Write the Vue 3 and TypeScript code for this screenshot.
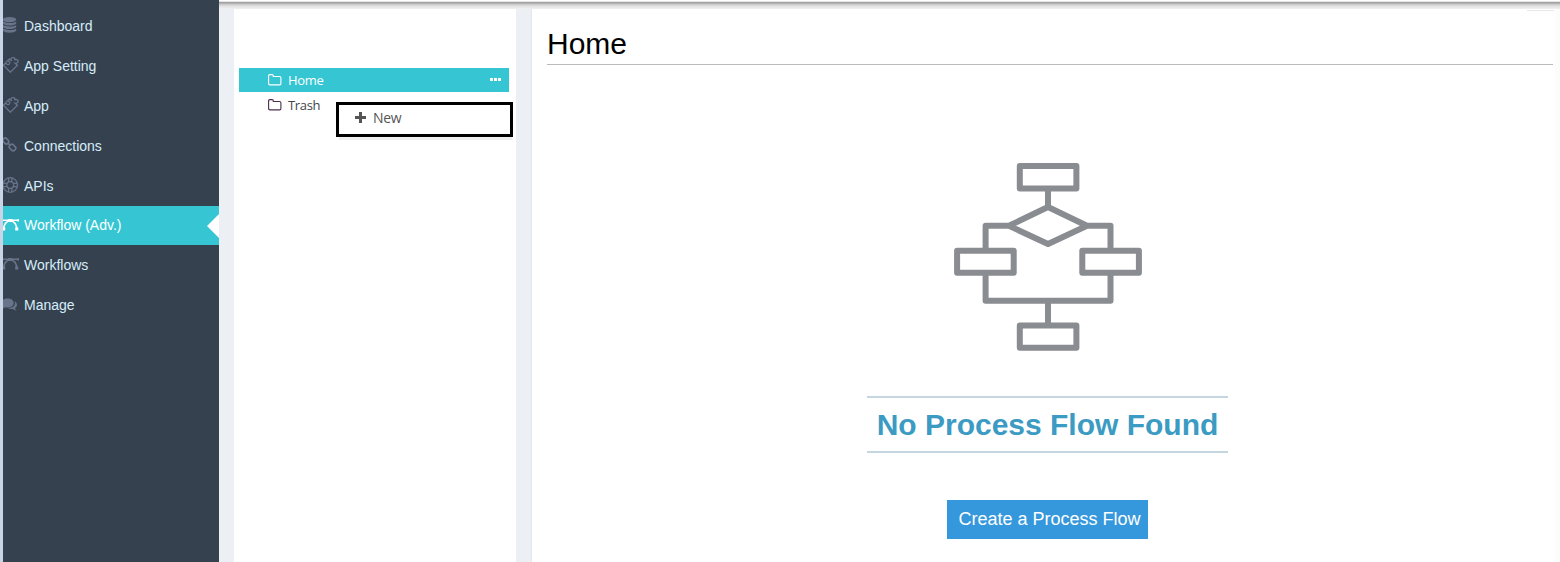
<script setup lang="ts">
interface NavItem {
  label: string
  icon: 'database' | 'puzzle' | 'link' | 'support' | 'vector' | 'bubbles'
  active?: boolean
}

const navItems: NavItem[] = [
  { label: 'Dashboard', icon: 'database' },
  { label: 'App Setting', icon: 'puzzle' },
  { label: 'App', icon: 'puzzle' },
  { label: 'Connections', icon: 'link' },
  { label: 'APIs', icon: 'support' },
  { label: 'Workflow (Adv.)', icon: 'vector', active: true },
  { label: 'Workflows', icon: 'vector' },
  { label: 'Manage', icon: 'bubbles' },
]

const folders = [
  { name: 'Home', selected: true },
  { name: 'Trash', selected: false },
]
</script>

<template>
  <div class="shell">
    <nav class="sidebar">
      <a v-for="item in navItems" :key="item.label" class="nav-item" :class="{ active: item.active }">
        <svg class="nav-icon" viewBox="0 0 16 16">
          <g v-if="item.icon === 'database'" class="solid">
            <ellipse cx="6.5" cy="2.6" rx="6.7" ry="2.6" />
            <path d="M-.2 4.4C2 6.5 11 6.5 13.2 4.4V6.4C11.5 9.2 1.5 9.2-.2 6.4Z" />
            <path d="M-.2 7.9C2 10 11 10 13.2 7.9V9.9C11.5 12.7 1.5 12.7-.2 9.9Z" />
            <path d="M-.2 11.4C2 13.5 11 13.5 13.2 11.4V13.4C11.5 16.4 1.5 16.4-.2 13.4Z" />
          </g>
          <g v-else-if="item.icon === 'puzzle'" class="line">
            <path d="M.4 8.3 7.3 15.2 14.4 8.2 12.3 6.3C14.4 6.7 15.8 4.7 14.7 3.2 13.7 2.1 12.3 2.3 11.3 3.2 12.6 1.6 11.2.2 9.6.6 7.9 1 7.5 2.7 8.8 4L6.6 2 4.4 4.1C6.2 3.8 7.4 5.4 6.4 6.8 5.2 8.2 3.2 7.5 3 5.7Z" />
          </g>
          <g v-else-if="item.icon === 'link'" class="chain">
            <rect x="-.3" y="1.8" width="6.2" height="4.4" rx="2" transform="rotate(45 2.8 4)" />
            <rect x="6.1" y="8" width="6.8" height="5" rx="2.2" transform="rotate(45 9.5 10.5)" />
            <path d="M4.6 5.8 7.4 8.6" />
          </g>
          <g v-else-if="item.icon === 'support'" class="line">
            <circle cx="7.2" cy="8" r="7.3" />
            <circle cx="7.2" cy="8" r="3.4" />
            <path d="M5.6.9V4.9M8.8.9V4.9M5.6 11.1V15.1M8.8 11.1V15.1M.1 6.4H4.1M.1 9.6H4.1M10.3 6.4H14.3M10.3 9.6H14.3" />
          </g>
          <g v-else-if="item.icon === 'vector'" transform="translate(0 1.2)">
            <path class="curve" d="M-1 2.1H15.8M.8 11C.8 6 2.8 3.2 7.2 2.5 11.7 3.2 13.7 6 13.7 11" />
            <path class="solid" d="M5 .8H9.4V3.8H5ZM-.9 9.4H2.2V12.4H-.9ZM12.2 9.4H15.3V12.4H12.2ZM14.4 1H16V3.2H14.4Z" />
          </g>
          <g v-else class="solid" transform="translate(0 1.2)">
            <path d="M4.5 1.4C8.3 1.4 10.7 3.3 10.7 5.9S8.3 10.4 4.5 10.4C3.6 10.4 2.8 10.3 2.1 10.1 1 11 .1 11.5-1.5 11.7-.7 10.9-.1 10.1 0 9-1.4 8.2-2 7.1-2 5.9-2 3.3.7 1.4 4.5 1.4Z" />
            <path d="M11.8 4C13.2 4.8 14 6 14 7.4 14 8.8 13.3 9.9 12.1 10.7 12.2 11.9 12.8 12.6 13.6 13.5 12.2 13.3 11 12.7 9.9 11.8 7.8 12.1 6.2 11.8 4.9 11.1 9.1 11 12.1 8.8 12.1 5.9Z" />
          </g>
        </svg>
        <span class="nav-label">{{ item.label }}</span>
      </a>
    </nav>

    <div class="body">
      <header class="topbar"></header>
      <div class="columns">
        <aside class="tree">
          <div v-for="folder in folders" :key="folder.name" class="folder" :class="{ selected: folder.selected }">
            <svg class="folder-icon" viewBox="0 0 14 12">
              <path d="M.6 9.6V1.9Q.6.6 1.9.6H4.1Q5.3.6 5.3 1.9V2.5H11.6Q12.9 2.5 12.9 3.8V9.6Q12.9 10.9 11.6 10.9H1.9Q.6 10.9.6 9.6Z" />
            </svg>
            <span>{{ folder.name }}</span>
            <svg v-if="folder.selected" class="dots" viewBox="0 0 11 3">
              <path d="M0 0H3V3H0ZM4 0H7V3H4ZM8 0H11V3H8Z" />
            </svg>
          </div>
          <div class="context-menu">
            <svg class="plus" viewBox="0 0 11 11">
              <path d="M4 0H7V4H11V7H7V11H4V7H0V4H4Z" />
            </svg>
            <span>New</span>
          </div>
        </aside>

        <main class="content">
          <div class="toolbar-edge"></div>
          <h1>Home</h1>
          <section class="empty">
            <svg class="flow" viewBox="0 0 188 188">
              <rect x="65.8" y="3" width="56.6" height="22.5" />
              <rect x="3.1" y="87.7" width="56.6" height="22.1" />
              <rect x="128.3" y="87.7" width="56.6" height="22.1" />
              <rect x="65.8" y="162.5" width="56.6" height="22.3" />
              <path d="M94 25V44M94 44 55 62.8 94 81 133 62.8ZM55 62.8H31.6V87M133 62.8H156.5V87M31.6 110V137.8H156.5V110M94 138V162" />
            </svg>
            <h2>No Process Flow Found</h2>
            <button type="button">Create a Process Flow</button>
          </section>
        </main>
      </div>
    </div>
  </div>
</template>

<style>
body {
  margin: 0;
  overflow: hidden;
}
</style>

<style scoped>
.shell {
  display: flex;
  width: 1560px;
  height: 562px;
  overflow: hidden;
  background: #ecf0f4;
  font-family: "Liberation Sans", Arial, sans-serif;
}

.sidebar {
  box-sizing: border-box;
  flex: 0 0 219px;
  padding-top: 6px;
  border-left: 3px solid #c8d5e7;
  background: #364150;
}

.nav-item {
  position: relative;
  display: flex;
  align-items: center;
  box-sizing: border-box;
  height: 40px;
  color: #d5edf8;
  font-size: 14px;
}

.nav-icon {
  width: 16px;
  height: 16px;
  margin: -2px 5px 0 0;
  color: #68748a;
}

.nav-label {
  line-height: 16px;
}

.active {
  height: 39px;
  background: #36c6d3;
  color: #fff;
}

.active .nav-label {
  margin-top: -2px;
}

.active .nav-icon {
  color: #fff;
}

.active::after {
  position: absolute;
  top: 8px;
  right: 0;
  border-top: 12px solid transparent;
  border-right: 12px solid #fff;
  border-bottom: 12px solid transparent;
  content: "";
}

.solid {
  fill: currentColor;
}

.line,
.chain,
.curve {
  fill: none;
  stroke: currentColor;
  stroke-width: 1.3;
}

.chain {
  stroke-width: 1.6;
}

.curve {
  stroke-width: 1.5;
}

.body {
  display: flex;
  flex: 1;
  flex-direction: column;
  min-width: 0;
}

.topbar {
  height: 9px;
  background: linear-gradient(#fff 0 1px, #e5e5e5 1px 2px, #a2a2a2 2px 3px, #b4b4b4 3px 4px, #cbcbcb 4px 5px, #d9d9d9 5px 6px, #e3e3e3 6px 7px, #e9e9e9 7px 8px, #eeeeee 8px 9px);
}

.columns {
  display: flex;
  flex: 1;
  gap: 15px;
  padding-left: 15px;
}

.tree {
  position: relative;
  box-sizing: border-box;
  flex: 0 0 282px;
  padding: 59px 7px 0 5px;
  background: #fff;
  font: 13px/24px "Open Sans", sans-serif;
  letter-spacing: -0.35px;
}

.folder {
  display: flex;
  align-items: center;
  height: 24px;
  margin-bottom: 1px;
  padding: 0 8px 0 29px;
  color: #41464c;
}

.folder-icon {
  width: 14px;
  height: 12px;
  margin-right: 6px;
  fill: none;
  stroke: #4d2c4d;
  stroke-width: 1.1;
}

.selected {
  background: #36c6d3;
  color: #fff;
}

.selected .folder-icon {
  stroke: #fff;
}

.dots {
  width: 11px;
  height: 3px;
  margin: -2px 0 0 auto;
  fill: #fff;
}

.context-menu {
  position: absolute;
  top: 93px;
  left: 102px;
  display: flex;
  align-items: center;
  box-sizing: border-box;
  width: 177px;
  height: 35px;
  padding: 0 0 3px 16px;
  border: 3px solid #000;
  background: #fff;
  box-shadow: 1px 5px 0 -2px #eee;
  color: #555;
  font-size: 14px;
}

.plus {
  width: 11px;
  height: 11px;
  margin: -1px 7px 0 0;
  fill: #555;
}

.content {
  position: relative;
  box-sizing: border-box;
  flex: 1;
  padding: 0 7px 0 15px;
  border-left: 1px solid #e2e7ec;
  background: linear-gradient(to left, #fcfcfc 5px, #fff 5px);
}

.toolbar-edge {
  position: absolute;
  top: 1px;
  right: 6px;
  width: 27px;
  height: 1px;
  background: #e8e8e8;
}

h1 {
  box-sizing: border-box;
  height: 56px;
  margin: 0;
  padding-top: 17px;
  border-bottom: 1px solid #bbb;
  color: #000;
  font-size: 30px;
  font-weight: 400;
  line-height: 35px;
}

.empty {
  display: flex;
  flex-direction: column;
  align-items: center;
  padding-top: 98px;
  padding-right: 5px;
}

.flow {
  width: 188px;
  height: 188px;
  fill: none;
  stroke: #898c90;
  stroke-linejoin: round;
  stroke-width: 6;
}

h2 {
  box-sizing: border-box;
  width: 361px;
  height: 57px;
  margin: 45px 0 47px;
  border: solid #c6d6e0;
  border-width: 2px 0;
  color: #3c9bc3;
  font-size: 30px;
  font-weight: 700;
  line-height: 53px;
  text-align: center;
  white-space: nowrap;
}

button {
  width: 201px;
  height: 39px;
  padding: 0 0 0 4px;
  border: 0;
  background: #3598dc;
  color: #fff;
  font: 18px "Liberation Sans", Arial, sans-serif;
  white-space: nowrap;
}
</style>
